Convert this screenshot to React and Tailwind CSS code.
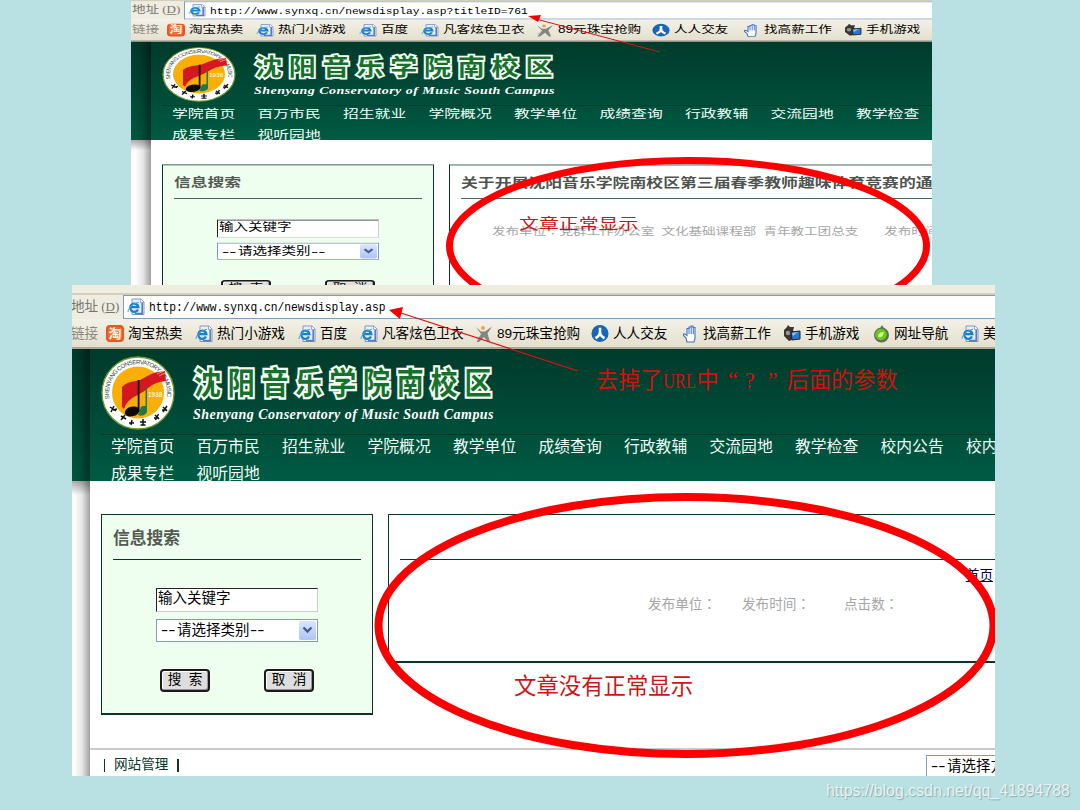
import React from "react";

const SANS = "font-['Liberation_Sans','Noto_Sans_CJK_SC',sans-serif]";

function IeIcon() {
  return (
    <svg width="18" height="18" viewBox="0 0 18 18">
      <path d="M5 1h9l3 3v12.5H5z" fill="#e9effb" stroke="#7f95cc" />
      <path d="M15.2 4v11.6H8" fill="none" stroke="#5f77bd" strokeWidth="1.6" />
      <path d="M13.5 1v3.4H17" fill="#fff" stroke="#7f95cc" strokeWidth=".8" />
      <circle cx="7.3" cy="9.6" r="5" fill="#d5f0fc" />
      <path
        d="M11 11.6a4.1 4.1 0 1 1 .4-2.4H4.4"
        fill="none"
        stroke="#1c7fce"
        strokeWidth="2.3"
      />
      <path d="M1.200 14C0 12 5 5.500 12 4.200" fill="none" stroke="#49a6e4" strokeWidth="1" />
    </svg>
  );
}

function TaoIcon() {
  return (
    <span className="flex h-[17px] w-[18px] items-center justify-center rounded-[4px] border-2 border-[#ea5523] bg-[#f26a35] text-[13px] leading-none font-bold text-[#fff3df]">
      淘
    </span>
  );
}

function RunnerIcon() {
  return (
    <svg width="18" height="18" viewBox="0 0 18 18">
      <circle cx="8" cy="3" r="1.900" fill="#f0a04a" />
      <path d="M1 2l5 4.500h4L17 1.500l-4.500 7L15 17h-2l-4-5-5 5H1.500L6 9z" fill="#85857f" />
      <path d="M1 14l4-3" stroke="#bcbcb4" />
    </svg>
  );
}

function RenIcon() {
  return (
    <svg width="19" height="19" viewBox="0 0 19 19">
      <circle cx="9.500" cy="9.500" r="9" fill="#1767b8" />
      <path
        d="M9.500 3.500v4.500c0 3-2 5-4.800 6.500M9.500 8c0 3 2 5 4.800 6.500"
        fill="none"
        stroke="#fff"
        strokeWidth="2.800"
      />
    </svg>
  );
}

function HandIcon() {
  return (
    <svg width="16" height="18" viewBox="0 0 16 18">
      <path
        d="M5 17L4 13 1.500 10.500V9H3l2 1.500V3.500h2V2h2V1h2v1.500h2V4v9l-1 4z"
        fill="#fff"
        stroke="#3f6fd0"
        strokeWidth="1.100"
      />
      <path d="M7 3.500V9M9.200 2V9M11.300 3v6" stroke="#3f6fd0" />
    </svg>
  );
}

function PhoneIcon() {
  return (
    <svg width="18" height="17" viewBox="0 0 18 17">
      <path d="M1 5l3-3 1-2 2 2h4l-1 4 3 2-1 6-6 2-5-5z" fill="#3b3636" />
      <circle cx="5" cy="8" r="2.300" fill="#9b928c" />
      <path d="M8 7l9-1v8l-8 1z" fill="#2c74d2" stroke="#222" />
      <path d="M9 8l6-1-5 4z" fill="#8cc2f5" />
    </svg>
  );
}

function NaviIcon() {
  return (
    <svg width="17" height="18" viewBox="0 0 17 18">
      <path d="M9 0l3 4.500L6 5z" fill="#6a746a" />
      <circle cx="8.500" cy="10" r="7.500" fill="#5d6b5b" />
      <circle cx="8" cy="9.500" r="5.800" fill="#6cc818" />
      <path d="M5 12c0-4 3-5 6-5-1 4-2 6-6 5z" fill="#d4f79b" />
    </svg>
  );
}

function Emblem() {
  return (
    <svg width="74" height="74" viewBox="0 0 74 74">
      <defs>
        <path id="ring" d="M8.600 43A29 29 0 0 1 37 8A29 29 0 0 1 65.500 43" />
      </defs>
      <circle cx="37" cy="37" r="36" fill="#fff" stroke="#6d9a35" strokeWidth="1.300" />
      <circle cx="37" cy="36.500" r="26" fill="#f9ae08" />
      <text className="font-['Liberation_Sans',sans-serif] text-[6px]" fill="#33443b">
        <textPath href="#ring" textLength="101">
          SHENYANG CONSERVATORY OF MUSIC
        </textPath>
      </text>
      <path d="M21 31c8-8 14-4 22-9s12-6 21-7l1 10c-9 1-13 3-19 8-10 8-19 8-23 20l-2-2z" fill="#d5181f" />
      <path d="M56 18l7-3M58 20l6-3" stroke="#f7b7a0" strokeWidth=".800" />
      <path d="M36.700 24h1.800v32h-1.800z" fill="#111" />
      <ellipse cx="31" cy="55.500" rx="7.500" ry="4.800" fill="#0b0b0b" transform="rotate(-15 31 55)" />
      <path d="M46 31v24c0 5-9 6-9 3 3-1 1-8 5-8h2.500V31z" fill="#1d7a45" />
      <text x="47" y="41" className="font-['Liberation_Sans',sans-serif] text-[6.500px] font-bold" fill="#fff0c0">
        1938
      </text>
      <g stroke="#111" strokeWidth="1.500" fill="none">
        <path d="M9 51l6 4M13 50l-3 6M12 54l4-1" />
        <path d="M20 60l5 3M24 59l-4 5" />
        <path d="M28 67l5 0M31 64l-1 5" />
        <path d="M39 66h6M42 63v6M39.500 69h5" />
        <path d="M54 59l4 4M57.500 58l-3 6M53 62h5" />
        <path d="M62 51l4 4M66 50l-4 6M61 54h5" />
      </g>
    </svg>
  );
}

const LINKS = [
  ["淘宝热卖", TaoIcon, "w-[89px]"],
  ["热门小游戏", IeIcon, "w-[103px]"],
  ["百度", IeIcon, "w-[62px]"],
  ["凡客炫色卫衣", IeIcon, "w-[115px]"],
  ["89元珠宝抢购", RunnerIcon, "w-[116px]"],
  ["人人交友", RenIcon, "w-[90px]"],
  ["找高薪工作", HandIcon, "w-[102px]"],
  ["手机游戏", PhoneIcon, "w-[89px]"],
  ["网址导航", NaviIcon, "w-[89px]"],
  ["美图", IeIcon, "w-[60px]"],
];

const NAV = [
  "学院首页", "百万市民", "招生就业", "学院概况", "教学单位", "成绩查询",
  "行政教辅", "交流园地", "教学检查", "校内公告", "校内新闻",
];

function Browser({ url }) {
  return (
    <>
      <div className="h-[10px] border-b-2 border-[#d6cebb] bg-[#efede0]" />
      <div className="flex h-[24px] items-stretch bg-[#efede2]">
        <div className="flex w-[53px] items-center gap-[3px] pl-[1px] text-[13.6px] text-[#77756c]">
          <span>地址</span>
          <span className="font-['Liberation_Serif',serif] text-[13px]">
            (<u>D</u>)
          </span>
        </div>
        <div className="flex flex-1 items-center gap-[4px] border border-r-0 border-[#7f9db9] bg-white pl-[3px]">
          <IeIcon />
          <span className="origin-center scale-y-[1.120] pt-[2px] font-['Liberation_Mono',monospace] text-[11.270px] text-black">
            {url}
          </span>
        </div>
      </div>
      <div className="flex h-[30px] items-center border-b-2 border-[#aaa797] bg-linear-to-b from-[#f3f1e8] via-[#ece9da] to-[#e4e0cf] pt-[2px] text-[13.600px]">
        <span className="w-[36px] shrink-0 pl-[1px] text-[#8c8a80]">链接</span>
        {LINKS.map(([label, Icon, width]) => (
          <span key={label} className={"flex shrink-0 items-center gap-[4px] text-black " + width}>
            <span className="flex w-[18px] shrink-0 justify-center">
              <Icon />
            </span>
            {label}
          </span>
        ))}
      </div>
    </>
  );
}

function Header() {
  return (
    <div className="flex h-[132px] overflow-hidden bg-linear-to-b from-[#003a2b] to-[#005b43]">
      <div className="w-[20px] shrink-0 bg-linear-to-r from-[#00000000] via-[#00000020] to-[#00000070]" />
      <div className="flex flex-1 flex-col">
        <div className="ml-[11px] flex h-[86px] shrink-0 border-b border-[#00382a]">
          <div className="pt-[7px]">
            <Emblem />
          </div>
          <div className="ml-[19px] w-[700px] pt-[14px]">
            <div className="h-[42px] origin-center scale-y-[1.140] text-[27px] leading-[42px] font-bold tracking-[6.800px] whitespace-nowrap text-[#17702c] [-webkit-text-stroke:4px_#f5fff5] [paint-order:stroke_fill]">
              沈阳音乐学院南校区
            </div>
            <div className="-ml-px font-['Liberation_Serif',serif] text-[14px] leading-[19px] font-bold tracking-[0.460px] whitespace-nowrap text-white italic">
              Shenyang Conservatory of Music South Campus
            </div>
          </div>
          <div className="ml-auto h-[57px] w-[18px] shrink-0 border-b-2 border-l-2 border-[#00382a] bg-[#0a533e]" />
        </div>
        <div className="-mt-[2px] ml-[21px] flex w-[1000px] text-[15.800px] leading-[27px] text-[#f1fff8]">
          {NAV.map((n) => (
            <span key={n} className="w-[85.500px] shrink-0">{n}</span>
          ))}
        </div>
        <div className="ml-[21px] flex text-[15.800px] leading-[28px] text-[#f1fff8]">
          <span className="w-[85.500px]">成果专栏</span>
          <span>视听园地</span>
        </div>
      </div>
    </div>
  );
}

function ClassicButton({ children }) {
  return (
    <div className="flex h-[23px] w-[50px] items-center justify-center rounded-[4px] border-2 border-[#1a1a1a] bg-[#dedede] text-[13.600px] text-black shadow-[inset_1px_1px_0_#fff,inset_-1px_-1px_0_#999]">
      {children}
    </div>
  );
}

function Dashes() {
  return <span className="inline-block w-[16px] origin-left scale-x-[1.500]">--</span>;
}

function Colon() {
  return <span className="font-['Noto_Sans_CJK_TC',sans-serif]" lang="zh-TW">：</span>;
}

function SearchPanel() {
  return (
    <div className="h-[201px] w-[272px] shrink-0 border border-b-2 border-[#0a3629] bg-[#eefff0] px-[11px]">
      <div className="flex h-[45px] items-center border-b border-[#0a3629] pt-[4px] text-[16.800px] font-bold text-[#555a52]">
        信息搜索
      </div>
      <div className="mt-[28px] ml-[43px] h-[24px] w-[162px] border border-t-[#222] border-r-[#ccc] border-b-[#ccc] border-l-[#222] bg-white pl-px text-[14.500px] leading-[18px] text-black">
        输入关键字
      </div>
      <div className="mt-[7px] ml-[43px] flex h-[23px] w-[162px] items-center border border-[#7f9db9] bg-white pb-px pl-[4px] text-[14.500px] leading-[20px] text-black">
        <span className="flex-1">
          <Dashes />请选择类别<Dashes />
        </span>
        <span className="mr-px flex h-[19px] w-[17px] items-center justify-center rounded-[2px] bg-linear-to-b from-[#dbe6ff] to-[#aec4f6]">
          <svg width="11" height="8" viewBox="0 0 11 8">
            <path d="M1.500 1.500l4 4 4-4" fill="none" stroke="#44608e" strokeWidth="2.400" />
          </svg>
        </span>
      </div>
      <div className="mt-[27px] ml-[47px] flex gap-[54px]">
        <ClassicButton>搜&nbsp; 索</ClassicButton>
        <ClassicButton>取&nbsp; 消</ClassicButton>
      </div>
    </div>
  );
}

function Body({ title, meta, home, note, tall }) {
  return (
    <div className="flex h-[295px] bg-white">
      <div className="w-[20px] shrink-0 bg-linear-to-r from-white from-20% via-[#e6e6e6] via-60% to-[#a0a0a0]">
        <div className="h-[14px] bg-linear-to-b from-[#00000055] to-[#00000000]" />
      </div>
      <div className="flex w-[905px] shrink-0 flex-col">
        <div className="ml-[11px] flex h-[267px] gap-[15px] pt-[33px]">
          <SearchPanel />
          <div className="flex-1">
            <div
              className={
                "border-t border-b-2 border-l border-[#0a3629] pl-[11px] " + (tall ? "h-[234px]" : "h-[149px]")
              }
            >
              <div className="flex h-[45px] items-center border-b border-[#0a3629] pt-[4px] text-[16.850px] font-bold whitespace-nowrap text-[#4e5450]">
                {title}
              </div>
              <div className="flex h-[30px] items-center justify-end pt-[3px] pr-[2px] text-[13.600px] text-[#00004c] underline">
                {home}
              </div>
              <div className="flex h-[28px] items-center text-[13.600px] whitespace-nowrap text-[#a6a6a6]">{meta}</div>
            </div>
            {note}
          </div>
        </div>
        <div className="flex h-[28px] border-t-2 border-[#cacaca] text-[#0a3629]">
          <div className="flex items-center gap-[9px] pt-[4px] pl-[14px] text-[13.600px]">
            <span className="h-[13px] w-px bg-[#0a3629]" />
            网站管理
            <span className="h-[13px] w-[2px] bg-[#0a3629]" />
          </div>
          <div className="mt-[5px] ml-auto h-[24px] w-[69px] overflow-hidden border border-r-0 border-[#7f9db9] pl-[4px] text-[14.500px] leading-[20px] whitespace-nowrap text-black">
            <Dashes />请选择方式
          </div>
        </div>
      </div>
    </div>
  );
}

export default function App() {
  return (
    <div className={"relative h-[810px] w-[1080px] overflow-hidden bg-[#b9e0e2] " + SANS}>
      <div className="relative ml-[131px] h-[285px] w-[801px] overflow-hidden bg-white">
        <div className="-mt-[6px] w-[925px] origin-top-left scale-y-[0.745]">
          <Browser url="http://www.synxq.cn/newsdisplay.asp?titleID=761" />
          <Header />
          <Body
            tall
            title="关于开展沈阳音乐学院南校区第三届春季教师趣味体育竞赛的通知"
            meta={
              <>
                <span className="ml-[31px] tracking-[-0.080px]">
                  发布单位<Colon />党群工作办公室&nbsp; 文化基础课程部&nbsp; 青年教工团总支
                </span>
                <span className="ml-[26px]">发布时间<Colon /></span>
              </>
            }
          />
        </div>
        <div className="absolute top-[209px] left-[388px] origin-center scale-y-[0.745] text-[19.900px] leading-[30px] text-[#cf1414]">
          文章正常显示
        </div>
        <svg className="absolute top-0 left-0" width="801" height="285" viewBox="131 0 801 285">
          <ellipse cx="688" cy="246" rx="238.500" ry="85.500" fill="none" stroke="#fb0000" strokeWidth="7" />
          <path d="M536 19L660 52" stroke="#df1010" strokeWidth="1" />
          <path d="M528 16L541 15L538 22z" fill="#f00000" />
        </svg>
      </div>
      <div className="relative ml-[72px] h-[491px] w-[923px] overflow-hidden bg-white">
        <div className="-ml-[2px] w-[925px]">
          <Browser url="http://www.synxq.cn/newsdisplay.asp" />
          <Header />
          <Body
            home="首页"
            meta={
              <>
                <span className="ml-[248px] w-[94px]">发布单位<Colon /></span>
                <span className="w-[102px]">发布时间<Colon /></span>
                <span>点击数<Colon /></span>
              </>
            }
            note={
              <div className="ml-[126px] pt-[7px] text-[22.400px] leading-[34px] text-[#cf1414]">文章没有正常显示</div>
            }
          />
        </div>
        <div className="absolute top-[79px] left-[524px] flex text-[22.200px] leading-[34px] whitespace-nowrap text-[#d80c0c]">
          <span>去掉了</span>
          <span className="w-[34px] font-['Liberation_Serif',serif] text-[21px]">
            <span className="inline-block origin-left scale-x-[0.780]">URL</span>
          </span>
          <span>中</span>
          <span className="w-[20px] pr-[1px] text-right font-['Liberation_Serif',serif]">“</span>
          <span className="w-[29px] pl-[6px] font-['Liberation_Serif',serif]">?</span>
          <span className="w-[19px] font-['Liberation_Serif',serif]">”</span>
          <span>后面的参数</span>
        </div>
        <svg className="absolute top-0 left-0" width="923" height="491" viewBox="72 285 923 491">
          <ellipse cx="686" cy="625.500" rx="307.500" ry="128.500" fill="none" stroke="#fb0000" strokeWidth="8" />
          <path d="M398 312L578 371" stroke="#df1010" strokeWidth="1.200" />
          <path d="M389 310L403 307L400 319z" fill="#f00000" />
        </svg>
      </div>
      <div className="absolute top-[779px] left-[826px] font-['Liberation_Sans',sans-serif] text-[15.900px] leading-[24px] whitespace-nowrap text-[#e4f3f4] [text-shadow:1px_1px_1px_#8fa9ab]">
        https://blog.csdn.net/qq_41894788
      </div>
    </div>
  );
}
